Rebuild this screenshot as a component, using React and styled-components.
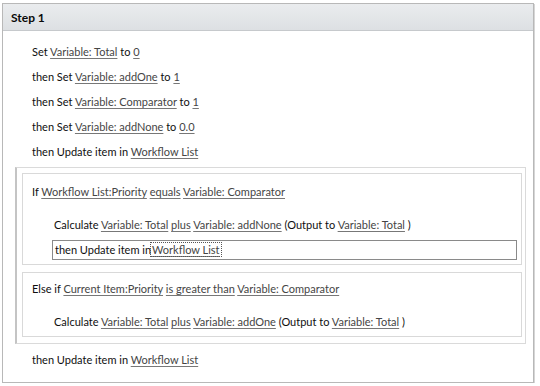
import styled, { createGlobalStyle } from "styled-components";

const GlobalStyle = createGlobalStyle`
  html, body {
    margin: 0;
    padding: 0;
    background: #ffffff;
  }
  body {
    font-family: Lato, "Open Sans", sans-serif;
    font-size: 11px;
    color: #0f0f0f;
  }
  * {
    box-sizing: border-box;
  }
`;

const Panel = styled.div`
  width: 532px;
  height: 380px;
  margin: 3px 0 0 2px;
  border: 1px solid #b8b8b8;
  box-shadow: 1px 1px 0 #d6d6d6;
  background: #ffffff;
  display: flex;
  flex-direction: column;
`;

const Header = styled.div`
  height: 27px;
  padding-left: 8px;
  display: flex;
  align-items: center;
  background: linear-gradient(#eaecee, #dde0e3);
  border-bottom: 1px solid #c6c9cc;
  font-weight: 700;
  font-size: 12px;
  color: #0a0a0a;
`;

const Body = styled.div`
  display: flex;
  flex-direction: column;
  gap: 5px;
  padding-top: 11px;
`;

const Row = styled.div`
  height: 20px;
  line-height: 20px;
  white-space: pre;
  padding-left: ${({ $indent }) => $indent}px;
  margin-top: ${({ $top = 0 }) => $top}px;
`;

const Link = styled.span`
  color: #454545;
  text-decoration: underline;
  text-underline-offset: 2px;
  text-decoration-color: #777;
`;

const FocusLink = styled(Link)`
  outline: 1px dotted #555;
  outline-offset: 0;
  padding: 0 1px;
`;

const Block = styled.div`
  margin: 0 7px 0 12px;
  padding: 5px 3px 6px 5px;
  border: 1px solid #dadada;
  border-left: 2px solid #c4c4c4;
  display: flex;
  flex-direction: column;
  gap: 7px;
`;

const Branch = styled.div`
  border: 1px solid #d9d9d9;
  padding: ${({ $top }) => $top}px 0 4px;
  display: flex;
  flex-direction: column;
`;

const SelectedRow = styled.div`
  height: 20px;
  line-height: 18px;
  margin: 5px 4px 0 29px;
  padding-left: 2px;
  border: 1px solid #8a8a8a;
  white-space: pre;
`;

const App = () => {
  return (
    <>
      <GlobalStyle />
      <Panel>
        <Header>Step 1</Header>
        <Body>
          <Row $indent={29}>
            Set <Link>Variable: Total</Link> to <Link>0</Link>
          </Row>
          <Row $indent={29}>
            then Set <Link>Variable: addOne</Link> to <Link>1</Link>
          </Row>
          <Row $indent={29}>
            then Set <Link>Variable: Comparator</Link> to <Link>1</Link>
          </Row>
          <Row $indent={29}>
            then Set <Link>Variable: addNone</Link> to <Link>0.0</Link>
          </Row>
          <Row $indent={29}>
            then Update item in <Link>Workflow List</Link>
          </Row>
          <Block>
            <Branch $top={8}>
              <Row $indent={9}>
                If <Link>Workflow List:Priority</Link> <Link>equals</Link>{" "}
                <Link>Variable: Comparator</Link>
              </Row>
              <Row $indent={31} $top={13}>
                Calculate <Link>Variable: Total</Link> <Link>plus</Link>{" "}
                <Link>Variable: addNone</Link> (Output to{" "}
                <Link>Variable: Total</Link> )
              </Row>
              <SelectedRow>
                then Update item in<FocusLink>Workflow List</FocusLink>
              </SelectedRow>
            </Branch>
            <Branch $top={6}>
              <Row $indent={9}>
                Else if <Link>Current Item:Priority</Link>{" "}
                <Link>is greater than</Link> <Link>Variable: Comparator</Link>
              </Row>
              <Row $indent={31} $top={13}>
                Calculate <Link>Variable: Total</Link> <Link>plus</Link>{" "}
                <Link>Variable: addOne</Link> (Output to{" "}
                <Link>Variable: Total</Link> )
              </Row>
            </Branch>
          </Block>
          <Row $indent={29} $top={1}>
            then Update item in <Link>Workflow List</Link>
          </Row>
        </Body>
      </Panel>
    </>
  );
};

export default App;
